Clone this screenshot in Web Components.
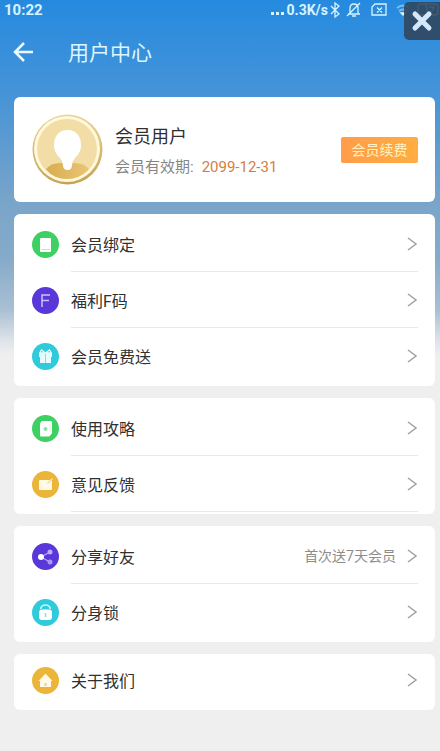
<!DOCTYPE html>
<html lang="zh-CN">
<head>
<meta charset="utf-8">
<meta name="viewport" content="width=device-width, initial-scale=1">
<title>用户中心</title>
<style>
body { margin: 0; background: #efefef; color: #303030; font-family: Roboto, "Noto Sans CJK SC", sans-serif; }
</style>
</head>
<body>
<user-center></user-center>
<script>
const define = (name, html, setup) => {
  const tpl = document.createElement('template');
  tpl.innerHTML = html;
  customElements.define(name, class extends HTMLElement {
    constructor() {
      super();
      this.attachShadow({ mode: 'open' }).append(tpl.content.cloneNode(true));
    }
    connectedCallback() { if (setup) setup(this, this.shadowRoot); }
  });
};

const icons = {
  book: ['#3fd064', '<rect x="8" y="7" width="11" height="14" rx="1" fill="#fff"/><path d="M9 18.500h9" stroke="#b5efc5"/>'],
  code: ['#5937d8', '<path d="M10 20V8h8M10 13.500h7" fill="none" stroke="#cdc2ff" stroke-width="1.500"/>'],
  gift: ['#2fcbdc', '<path d="M7 10h13v4H7zM8 14h11v6H8z" fill="#e4fcff"/><path d="M13.500 10v10" stroke="#7be0ea"/><path d="M13.500 10L9.500 7 8 9.500zM13.500 10L17.500 7 19 9.500z" fill="none" stroke="#e4fcff" stroke-width="1.200"/>'],
  guide: ['#3fd064', '<path d="M10 7h9v11l-2 2.500H9V9z" fill="#fff" stroke="#fff" stroke-width="2" stroke-linejoin="round"/><circle cx="13.500" cy="14" r="2" fill="#8ae3a1"/><path d="M18 9v8" stroke="#d5f7de"/>'],
  mail: ['#ebb53a', '<rect x="7" y="9" width="13" height="10" rx="1" fill="#fff9e5"/><path d="M15 12l5-5 1 1-5 5z" fill="#f8dda0"/>'],
  share: ['#5937d8', '<path d="M18 9L9 14l9 5" fill="none" stroke="#b9a6ff" stroke-width="1.200"/><circle cx="9" cy="14" r="3" fill="#fff"/><circle cx="18" cy="9" r="2.500" fill="#bcaaff"/><circle cx="18" cy="19" r="2.500" fill="#a996f8"/>'],
  lock: ['#2fcbdc', '<path d="M8.500 10q1-4 5-4t5 4" fill="none" stroke="#c5f8fc" stroke-width="1.500"/><rect x="7" y="10.500" width="13" height="10.500" rx="3" fill="#fff"/><path d="M13.500 14v4" stroke="#83dfe8" stroke-width="1.500"/>'],
  home: ['#ebb53a', '<path d="M6.500 14l7-7.500 7 7.500H19v6H8v-6z" fill="#fff9e5"/><path d="M13.500 16v3" stroke="#f1cf83" stroke-width="2"/>']
};

define('status-bar', `
<style>
:host { display: flex; align-items: center; justify-content: space-between; height: 20px; padding: 0 0 0 4px; color: #d8f4ff; font-weight: 700; line-height: 20px; }
time { font-size: 15px; }
div { display: flex; align-items: center; }
span { font-size: 14px; }
svg { display: block; }
</style>
<time>10:22</time>
<div>
  <svg width="17" height="20" fill="currentColor"><rect x="1" y="12" width="3" height="3"/><rect x="6" y="12" width="3" height="3"/><rect x="11" y="12" width="3" height="3"/></svg>
  <span>0.3K/s</span>
  <svg width="112" height="20" fill="none" stroke="currentColor" stroke-width="1.300">
    <path d="M3 6l8 8-4 3V3l4 3-8 8"/>
    <path d="M20 14h12M22 14V8q0-4 4-4t4 4v6M24 16h4M32 3L19 16"/>
    <path d="M47 4h11v11H44V7zM49 7.500l5 5M54 7.500l-5 5"/>
    <g stroke="#7dbcf0" stroke-width="2"><path d="M69 8q6-5 12 0M71 11q4-3 8 0"/></g><path d="M73 13l2 2 2-2z" fill="currentColor"/>
    <rect x="90" y="4" width="20" height="11" rx="3"/><path d="M97 7l2-1v7M101 7h5l-3 6"/>
  </svg>
</div>`);

define('close-button', `
<style>
:host { display: block; }
button { display: grid; place-items: center; width: 36px; height: 38px; padding: 0; border: 0; border-radius: 5px 0 0 5px; background: rgb(48 70 92 / 88%); }
</style>
<button type="button" aria-label="关闭"><svg width="24" height="24" fill="none" stroke="#d5e7fa" stroke-width="5" stroke-linecap="round"><path d="M5 5l14 14M19 5L5 19"/></svg></button>`);

define('title-bar', `
<style>
:host { display: flex; align-items: center; gap: 33px; height: 64px; padding-left: 13px; color: #dcf6ff; }
button { padding: 0; border: 0; background: none; color: #fff; }
svg { display: block; }
h1 { margin: 0; padding-top: 2px; font-size: 21px; font-weight: 400; line-height: 32px; }
</style>
<button type="button" aria-label="返回"><svg width="22" height="22" fill="none" stroke="#e9faff" stroke-width="2.500"><path d="M20 11H3M11 2l-9 9 9 9"/></svg></button>
<h1><slot></slot></h1>`);

define('member-card', `
<style>
:host { display: flex; align-items: center; height: 105px; padding: 0 17px 0 18px; gap: 12px; border-radius: 6px; background: #fff; box-sizing: border-box; }
svg { flex: none; }
.info { flex: 1; display: grid; gap: 4px; padding-top: 2px; }
h2, p { margin: 0; font-weight: 400; white-space: nowrap; }
h2 { font-size: 18px; line-height: 28px; }
p { display: flex; gap: 8px; font-size: 15px; line-height: 24px; color: #858585; }
time { color: #d47f39; }
button { width: 77px; height: 26px; padding: 0; border: 0; border-radius: 2px; background: linear-gradient(90deg, #ff9d4a, #ffad42); color: #fff2c4; font: inherit; font-size: 14px; line-height: 26px; }
</style>
<svg width="71" height="71" viewBox="0 0 71 71">
  <defs><linearGradient id="rim" x1="0" y1="0" x2="0" y2="1"><stop offset="0" stop-color="#ead596"/><stop offset="1" stop-color="#c5a253"/></linearGradient>
  <linearGradient id="body"><stop offset="0" stop-color="#d9ad4f"/><stop offset="1" stop-color="#e9c575"/></linearGradient>
  <clipPath id="disc"><circle cx="35" cy="35" r="30"/></clipPath></defs>
  <circle cx="35.500" cy="35.500" r="35" fill="url(#rim)"/><circle cx="35" cy="35" r="33" fill="#fff8dc"/><circle cx="35" cy="35" r="30" fill="#f3dda6"/>
  <path d="M14 55q5-6 14-6h14q10 0 15 6-9 11-22 11T14 55z" fill="url(#body)" clip-path="url(#disc)"/>
  <path d="M35.500 16C26 16 22 23 22 31q0 8 6 13 3 3 3 7 0 5 4.500 5t4.500-5q0-4 3-7 6-5 6-13c0-8-4-15-13.500-15z" fill="#fff"/>
</svg>
<div class="info"><h2>会员用户</h2><p><span>会员有效期:</span><time datetime="2099-12-31">2099-12-31</time></p></div>
<button type="button">会员续费</button>`);

define('menu-card', `
<style>
:host { display: block; padding: 2px 0; border-radius: 6px; background: #fff; overflow: hidden; }
:host([single]) { padding: 0 0 4px; --row: 52px; }
</style>
<slot></slot>`);

define('menu-row', `
<style>
:host { display: block; padding: 0 17px 0 18px; }
a { display: flex; align-items: center; height: var(--row, 56px); color: inherit; text-decoration: none; }
.icon { flex: none; width: 27px; height: 27px; margin-right: 12px; }
.body { flex: 1; display: flex; align-items: center; align-self: stretch; justify-content: space-between; border-bottom: 1px solid transparent; box-sizing: border-box; }
:host([line]) .body { border-color: #e9e9e9; }
.label { padding-top: 4px; font-size: 16px; line-height: 24px; }
.side { display: flex; align-items: center; gap: 10px; font-size: 14px; line-height: 20px; color: #8c8c8c; }
.side svg { display: block; }
</style>
<a href="#"><svg class="icon" viewBox="0 0 27 27"></svg>
<span class="body"><span class="label"><slot></slot></span><span class="side"><slot name="note"></slot><svg width="12" height="16" fill="none" stroke="#a0a0a0" stroke-width="1.500"><path d="M2 2l8 6-8 6"/></svg></span></span></a>`,
(host, root) => {
  const [color, art] = icons[host.getAttribute('icon')];
  root.querySelector('.icon').innerHTML = `<circle cx="13.500" cy="13.500" r="13.500" fill="${color}"/>${art}`;
});

define('user-center', `
<style>
:host { display: block; position: relative; min-height: 100vh; background: linear-gradient(#258adf 0, #4493d8 90px, #5799d2 130px, #7aa5c9 205px, #86abc9 260px, #a9c0d3 310px, #dde3e9 340px, #efefef 355px) no-repeat; }
close-button { position: absolute; top: 2px; right: 0; }
main { display: flex; flex-direction: column; gap: 12px; padding: 13px 5px 40px 14px; }
</style>
<status-bar></status-bar>
<close-button></close-button>
<title-bar>用户中心</title-bar>
<main>
  <member-card></member-card>
  <menu-card>
    <menu-row icon="book" line>会员绑定</menu-row>
    <menu-row icon="code" line>福利F码</menu-row>
    <menu-row icon="gift">会员免费送</menu-row>
  </menu-card>
  <menu-card>
    <menu-row icon="guide" line>使用攻略</menu-row>
    <menu-row icon="mail" line>意见反馈</menu-row>
  </menu-card>
  <menu-card>
    <menu-row icon="share" line>分享好友<span slot="note">首次送7天会员</span></menu-row>
    <menu-row icon="lock">分身锁</menu-row>
  </menu-card>
  <menu-card single>
    <menu-row icon="home">关于我们</menu-row>
  </menu-card>
</main>`);
</script>
</body>
</html>
